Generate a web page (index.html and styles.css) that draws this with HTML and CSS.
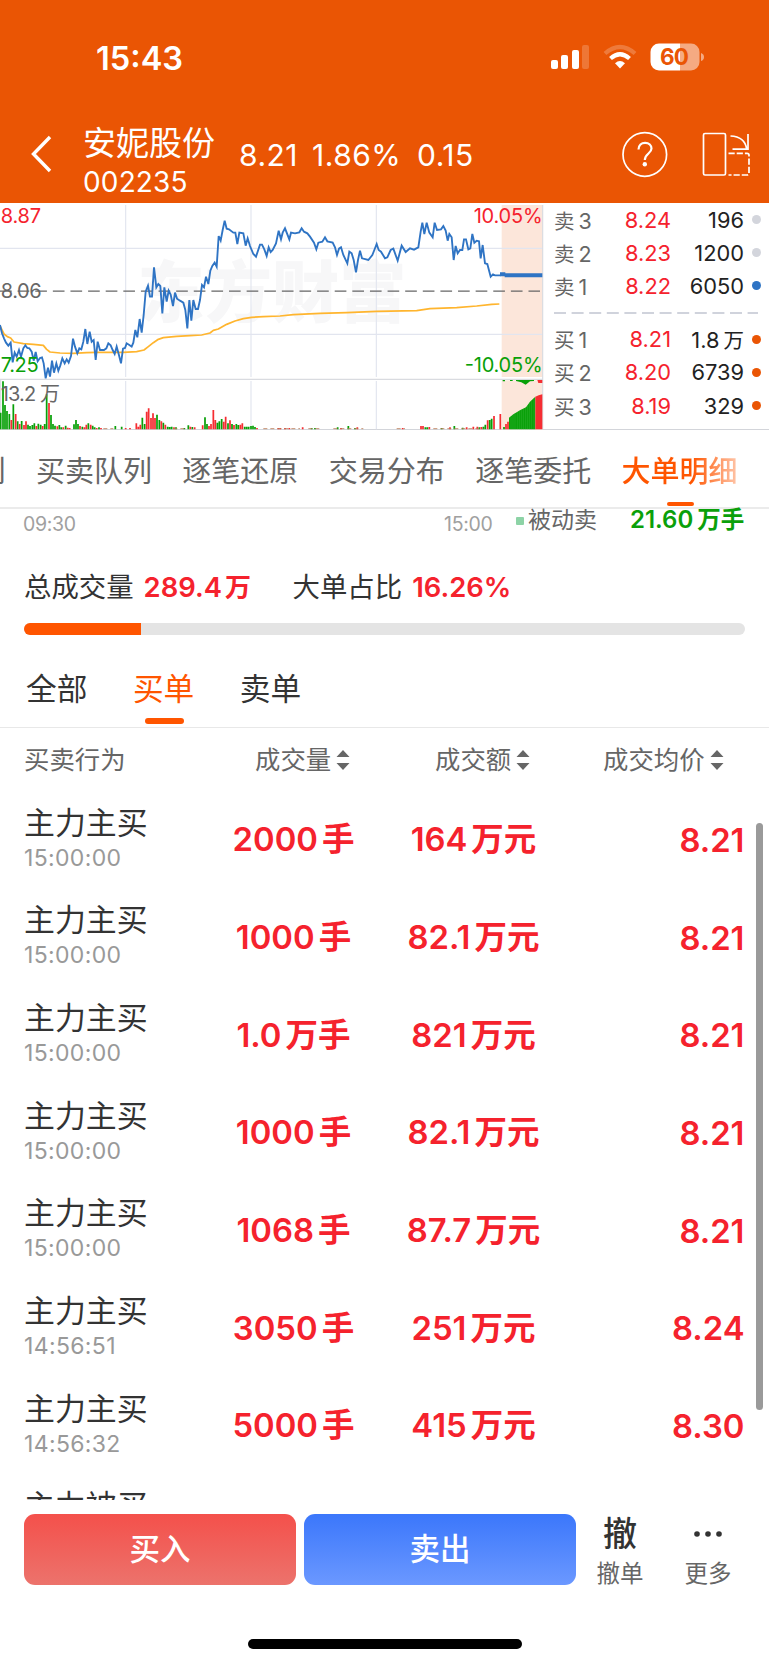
FILE: index.html
```html
<!DOCTYPE html>
<html lang="zh-CN">
<head>
<meta charset="utf-8">
<title>安妮股份 002235</title>
<link rel="stylesheet" href="styles.css">
</head>
<body>
<div class="app">
  <header class="top">
    <div class="status">
      <span class="clock">15:43</span>
      <svg class="status-icons" width="156" height="30" viewBox="0 0 156 30">
        <g fill="#fff">
          <rect x="0" y="17" width="7" height="9" rx="2"/>
          <rect x="10" y="12" width="7" height="14" rx="2"/>
          <rect x="21" y="7" width="7" height="19" rx="2"/>
          <rect x="31" y="2" width="7" height="24" rx="2" opacity=".2"/>
        </g>
        <g fill="none" stroke="#fff" stroke-width="4.2">
          <path d="M54 10.5Q69 -2.500 84 10.500" opacity=".22"/>
          <path d="M59.500 15.500Q69 7 78.500 15.500"/>
        </g>
        <path d="M64 20.200Q69 16 74 20.200L69 25.500Z" fill="#fff"/>
        <path d="M108 .5H129V27.500H108A8.500 8.500 0 0 1 99.500 19V9A8.500 8.500 0 0 1 108 .5Z" fill="#fff"/>
        <path d="M129 .5H140A8.500 8.500 0 0 1 148.500 9V19A8.500 8.500 0 0 1 140 27.500H129Z" fill="#fff" opacity=".5"/>
        <path d="M150 10Q153 11 153 14T150 18Z" fill="#fff" opacity=".5"/>
        <text class="battery" x="123.500" y="22" text-anchor="middle" textLength="29">60</text>
      </svg>
    </div>
    <div class="nav">
      <svg class="back" width="22" height="38" viewBox="0 0 22 38"><path d="M20 2L3.500 19L20 36" fill="none" stroke="#fff" stroke-width="3.4"/></svg>
      <div class="stock"><span class="name">安妮股份</span><span class="code">002235</span></div>
      <div class="quote"><span class="q1">8.21</span><span class="q2">1.86%</span><span class="q3">0.15</span></div>
      <svg class="nav-icons" width="130" height="48" viewBox="0 0 130 48">
        <g fill="none" stroke="#fff" stroke-width="1.7">
          <circle cx="22.800" cy="23.500" r="21.800"/>
          <path d="M16.500 18.500C16.500 14 19.500 11.800 23.100 11.800C27 11.800 29.500 14.300 29.500 17.600C29.500 22.500 22.800 22.700 22.800 29" stroke-width="2.200"/>
          <rect x="81.500" y="2.500" width="22" height="41.500" rx="1.500"/>
          <path d="M108.500 5C118.500 5.500 123.500 10.500 124.500 17.500M126 3V18.200H110.500"/>
          <path d="M106.500 22.300H125Q127 22.300 127 24V42Q127 44 125 44H106.500" stroke-dasharray="6.200 2"/>
        </g>
        <circle cx="22.800" cy="33.300" r="2.200" fill="#fff"/>
      </svg>
    </div>
  </header>

  <section class="market">
    <svg class="chart" width="545" height="227" viewBox="0 9 1635 681">
      <rect x="1505" y="15" width="122" height="516" fill="#fce6da"/>
      <rect x="1505" y="541" width="122" height="147" fill="#fce6da"/>
      <text class="mark" x="412" y="350" textLength="808">东方财富</text>
      <g fill="none" stroke="#e2e5ef" stroke-width="3.500">
        <path d="M0 145H1627M0 403H1627M377 15V531M377 543V688M753 15V531M753 543V688M1129 15V531M1129 543V688"/>
        <path d="M0 538H1628M2 538V688M1628 15V688" stroke="#d9dbe0"/>
      </g>
      <path d="M0 273.500H1620" fill="none" stroke="#666" stroke-width="3.600" stroke-dasharray="35 17.850"/>
      <g fill="none" stroke-width="5.200">
        <path stroke="#08a008" d="M2 688V638M9 688V544M15 688V615M21 688V633M28 688V642M40 688V613M53 688V664M65 688V663M84 688V674M90 688V678M97 688V675M103 688V670M115 688V671M122 688V674M134 688V672M140 688V583M153 688V645M159 688V672M165 688V677M178 688V675M184 688V682M197 688V677M222 688V673M228 688V660M234 688V672M247 688V680M265 688V670M278 688V677M284 688V682M297 688V682M346 688V678M365 688V680M427 688V653M434 688V672M471 688V644M478 688V660M490 688V668M503 688V680M509 688V681M515 688V680M528 688V682M553 688V684M565 688V676M577 688V681M615 688V652M621 688V672M652 688V668M658 688V664M665 688V657M684 688V670M696 688V672M709 688V672M715 688V675M734 688V680M740 688V680M746 688V680M753 688V678M759 688V677M765 688V681M935 688V684M945 688V684M1013 688V682M1045 688V678M1065 688V684M1276 688V682M1282 688V682M1325 688V684M1363 688V678M1388 688V683M1438 688V682M1450 688V680M1456 688V674M1469 688V660M1475 688V656M1512 688V681"/>
        <path stroke="#f52d32" d="M34 688V660M47 688V642M59 688V672M72 688V675M78 688V664M109 688V678M128 688V678M147 688V609M172 688V679M190 688V682M203 688V683M209 688V684M240 688V678M253 688V682M259 688V674M272 688V674M290 688V684M303 688V684M377 688V684M390 688V684M409 688V670M415 688V680M421 688V674M440 688V635M446 688V625M453 688V654M459 688V640M465 688V654M484 688V664M496 688V674M522 688V682M571 688V680M584 688V682M608 688V676M627 688V678M633 688V672M640 688V630M646 688V660M671 688V665M677 688V650M690 688V661M702 688V675M721 688V674M727 688V670M771 688V684M835 688V684M841 688V684M855 688V684M868 688V684M908 688V682M1023 688V684M1072 688V682M1208 688V684M1263 688V678M1269 688V678M1288 688V681M1350 688V682M1400 688V682M1420 688V680M1432 688V680M1444 688V681M1463 688V661M1482 688V648M1501 688V642M1518 688V672M1524 688V665"/>
      </g>
      <path d="M310 686H340M520 686H560M790 686H900M925 686H960M1000 686H1090M1190 686H1215M1300 686H1450" fill="none" stroke="#b87a55" stroke-width="2.500" stroke-dasharray="12 9"/>
      <path d="M1527 688V653L1540 643L1560 631L1578 622L1590 605L1606 590V688Z" fill="#08a008"/>
      <path d="M1606 688V590L1616 586L1627 583V688Z" fill="#f52d32"/>
      <path d="M1533 650V688M1539 644V688M1545 640V688M1552 636V688M1558 632V688M1564 628V688M1570 626V688M1577 622V688M1583 616V688M1589 606V688M1595 602V688M1602 594V688" stroke="#4fbb4f" stroke-width="1"/>
      <path d="M1508 540H1515V544H1508ZM1530 540H1538V543H1530ZM1548 540H1602V543L1590 544L1577 554L1564 547L1548 543Z" fill="#08a008"/>
      <path d="M1612 540H1627V549H1615Z" fill="#f52d32"/>
      <path fill="none" stroke="#ffb52e" stroke-width="5.200" stroke-linejoin="round" d="M0 378L12 402L22 410L32 414L42 426L70 431L100 433L130 436L140 448L150 456L180 459L220 460L260 458L290 457L370 457L410 455L432 450L445 440L460 428L475 418L490 413L530 409L570 407L605 405L630 399L640 391L655 387L680 373L705 363L730 356L755 352L790 350L840 348L880 344L960 340L1040 338L1130 334L1250 332L1290 326L1370 323L1430 318L1475 313L1498 312"/>
      <path fill="none" stroke="#2f74c4" stroke-width="5.600" d="M0 375L6 400L12 415L18 428L25 437L32 428L38 487L44 458L50 470L57 450L63 470L70 445L76 436L82 444L88 445L95 455L101 482L107 456L113 484L120 474L126 472L131 490L137 535L144 503L150 530L156 482L162 518L169 490L175 512L181 496L187 475L194 490L200 478L206 488L213 468L219 416L225 440L232 460L238 445L244 448L250 425L256 387L262 432L269 395L275 425L281 420L287 480L293 425L300 450L312 450L319 445L325 430L332 436L338 450L344 462L350 440L356 462L363 490L369 446L375 444L380 430L388 435L395 440L400 428L406 390L412 412L419 357L425 398L431 345L437 275L444 257L450 290L456 290L462 202L469 262L475 252L481 258L487 340L493 262L500 305L506 272L512 284L519 318L525 278L531 296L540 302L550 308L556 330L562 385L568 300L574 362L580 300L587 327L594 327L600 300L606 255L612 262L618 230L625 252L631 212L637 198L644 188L650 200L656 108L662 122L668 90L674 62L680 86L687 88L700 98L706 98L712 132L718 98L730 100L737 137L743 115L750 138L760 162L768 170L780 134L786 134L793 148L800 168L806 142L812 156L818 150L828 130L836 92L843 118L848 98L855 85L868 118L873 98L885 100L898 97L905 85L912 95L922 100L930 110L942 128L949 148L955 128L967 125L975 112L982 124L998 128L1005 142L1011 165L1017 146L1023 142L1030 165L1042 190L1048 155L1055 160L1061 180L1068 217L1074 180L1080 152L1086 175L1105 180L1117 165L1123 150L1130 132L1136 150L1143 155L1155 175L1162 172L1172 150L1180 146L1193 182L1205 137L1217 156L1230 145L1242 149L1255 142L1262 95L1267 68L1273 102L1280 68L1288 98L1298 112L1304 68L1311 90L1323 88L1330 78L1337 92L1343 122L1348 102L1355 112L1361 180L1367 138L1373 160L1380 150L1387 150L1392 118L1398 118L1405 148L1411 145L1417 102L1423 128L1430 122L1437 124L1442 175L1448 135L1455 190L1462 192L1472 230L1479 223L1485 226L1502 226"/>
      <path d="M1500 223H1516M1514 226H1627" fill="none" stroke="#2f74c4" stroke-width="12"/>
      <g class="axis">
        <text x="2" y="68" fill="#f5222d" textLength="121">8.87</text>
        <text x="2" y="293" fill="#666" textLength="123">8.06</text>
        <text x="2" y="517" fill="#08a008" textLength="114">7.25</text>
        <text x="2" y="602" fill="#666" textLength="178">13.2 万</text>
        <text x="1628" y="68" fill="#f5222d" text-anchor="end" textLength="207">10.05%</text>
        <text x="1628" y="517" fill="#08a008" text-anchor="end" textLength="234">-10.05%</text>
      </g>
    </svg>
    <div class="book">
      <div class="level"><span>卖<i>3</i></span><b>8.24</b><em>196</em><u class="dot grey"></u></div>
      <div class="level"><span>卖<i>2</i></span><b>8.23</b><em>1200</em><u class="dot grey"></u></div>
      <div class="level"><span>卖<i>1</i></span><b>8.22</b><em>6050</em><u class="dot blue"></u></div>
      <svg class="split" width="204" height="20" viewBox="0 0 204 20"><path d="M0 10H204" stroke="#d0d3dc" stroke-width="2" stroke-dasharray="12 5.600"/></svg>
      <div class="level"><span>买<i>1</i></span><b>8.21</b><em>1.8<i>万</i></em><u class="dot orange"></u></div>
      <div class="level"><span>买<i>2</i></span><b>8.20</b><em>6739</em><u class="dot orange"></u></div>
      <div class="level"><span>买<i>3</i></span><b>8.19</b><em>329</em><u class="dot orange"></u></div>
    </div>
  </section>

  <nav class="tabs">
    <span>买卖五列</span><span>买卖队列</span><span>逐笔还原</span><span>交易分布</span><span>逐笔委托</span><span class="active">大单明细</span>
  </nav>

  <section class="flow">
    <span class="t-start">09:30</span><span class="t-end">15:00</span>
    <u class="swatch"></u><span class="kind">被动卖</span><b class="vol">21.60<i>万手</i></b>
  </section>

  <section class="summary">
    <div class="totals"><span>总成交量</span><b class="total">289.4<i>万</i></b><span class="share-label">大单占比</span><b class="share">16.26%</b></div>
    <div class="bar"><div class="fill" style="width:16.26%"></div></div>
  </section>

  <nav class="filters"><span>全部</span><span class="active">买单</span><span>卖单</span></nav>

  <div class="cols">
    <span class="c1">买卖行为</span>
    <span class="c2">成交量<svg width="14" height="22" viewBox="0 0 14 22"><path d="M7 1L13.500 8H.5ZM.5 14H13.500L7 21Z"/></svg></span>
    <span class="c3">成交额<svg width="14" height="22" viewBox="0 0 14 22"><path d="M7 1L13.500 8H.5ZM.5 14H13.500L7 21Z"/></svg></span>
    <span class="c4">成交均价<svg width="14" height="22" viewBox="0 0 14 22"><path d="M7 1L13.500 8H.5ZM.5 14H13.500L7 21Z"/></svg></span>
  </div>

  <main class="list">
    <div class="row"><div class="who"><span>主力主买</span><time>15:00:00</time></div><b class="lots">2000<i>手</i></b><b class="amt">164<i>万元</i></b><b class="avg">8.21</b></div>
    <div class="row"><div class="who"><span>主力主买</span><time>15:00:00</time></div><b class="lots">1000<i>手</i></b><b class="amt">82.1<i>万元</i></b><b class="avg">8.21</b></div>
    <div class="row"><div class="who"><span>主力主买</span><time>15:00:00</time></div><b class="lots">1.0<i>万手</i></b><b class="amt">821<i>万元</i></b><b class="avg">8.21</b></div>
    <div class="row"><div class="who"><span>主力主买</span><time>15:00:00</time></div><b class="lots">1000<i>手</i></b><b class="amt">82.1<i>万元</i></b><b class="avg">8.21</b></div>
    <div class="row"><div class="who"><span>主力主买</span><time>15:00:00</time></div><b class="lots">1068<i>手</i></b><b class="amt">87.7<i>万元</i></b><b class="avg">8.21</b></div>
    <div class="row"><div class="who"><span>主力主买</span><time>14:56:51</time></div><b class="lots">3050<i>手</i></b><b class="amt">251<i>万元</i></b><b class="avg">8.24</b></div>
    <div class="row"><div class="who"><span>主力主买</span><time>14:56:32</time></div><b class="lots">5000<i>手</i></b><b class="amt">415<i>万元</i></b><b class="avg">8.30</b></div>
    <div class="row"><div class="who"><span>主力被买</span></div></div>
    <div class="thumb"></div>
  </main>

  <footer class="actions">
    <div class="btn buy">买入</div>
    <div class="btn sell">卖出</div>
    <div class="act cancel"><strong>撤</strong><span>撤单</span></div>
    <div class="act more"><svg width="30" height="34" viewBox="0 0 30 34"><g fill="#333"><circle cx="4" cy="16" r="2.800"/><circle cx="15" cy="16" r="2.800"/><circle cx="26" cy="16" r="2.800"/></g></svg><span>更多</span></div>
  </footer>
  <div class="home"></div>
</div>
</body>
</html>
```
FILE: styles.css
```css
* { box-sizing: border-box; }
body { margin: 0; background: #fff; }
i, em, u { font-style: normal; text-decoration: none; }
svg { display: block; flex: none; }

.app {
  width: 769px;
  height: 1665px;
  overflow: hidden;
  display: flex;
  flex-direction: column;
  font-family: Inter, "Noto Sans CJK SC", sans-serif;
  color: #333;
  white-space: nowrap;
}
.app > * { flex: none; }

.top { height: 203px; background: #ea5504; color: #fff; }
.status { height: 115px; display: flex; align-items: flex-start; padding: 37px 0 0 96px; }
.clock { width: 455px; font-size: 32.600px; line-height: 42px; font-weight: 600; }
.status-icons { margin-top: 6px; }
.battery { font: 700 22.500px Inter, sans-serif; fill: #ea5504; }

.nav { height: 88px; display: flex; align-items: flex-start; padding-left: 30px; }
.back { margin-top: 20px; }
.stock { width: 156px; margin-left: 31px; padding-top: 8px; display: flex; flex-direction: column; }
.name { font-size: 33px; line-height: 40px; }
.code { font-size: 28px; line-height: 38px; letter-spacing: .15px; }
.quote { width: 383px; display: flex; padding-top: 20px; font-size: 30px; line-height: 40px; letter-spacing: .5px; }
.q1 { width: 73px; }
.q2 { width: 105px; }
.nav-icons { margin-top: 16px; }

.market { height: 227px; display: flex; border-bottom: 1px solid #d3d5da; }
.axis { font: 60px Inter, "Noto Sans CJK SC", sans-serif; }
.mark { font: 900 202px "Noto Sans CJK SC", sans-serif; fill: #f7f7f8; }
.book { width: 224px; padding: 0 0 0 9px; font-size: 21.800px; }
.level { height: 33.200px; display: flex; align-items: center; }
.level span { width: 52px; color: #666; font-size: 20.500px; }
.level span i { margin-left: 4px; font-size: 21.500px; }
.level b { width: 65px; text-align: right; font-weight: 400; color: #f5222d; }
.level em { width: 73px; text-align: right; color: #222; }
.level em i { margin-left: 4px; font-size: 20.500px; }
.dot { width: 9px; height: 9px; border-radius: 50%; margin-left: 8px; }
.grey { background: #d3d5dc; }
.blue { background: #2f74c4; }
.orange { background: #ea5504; }

.tabs {
  height: 79px;
  padding-top: 17px;
  margin-left: -110.500px;
  width: 879.500px;
  display: flex;
  gap: 30.400px;
  border-bottom: 2px solid #ebebeb;
  font-size: 29px;
  line-height: 50px;
  color: #666;
}
.tabs .active {
  position: relative;
  font-weight: 500;
  background: linear-gradient(90deg, #ff5500 60%, #ffd5c0 105%);
  -webkit-background-clip: text;
  background-clip: text;
  color: transparent;
}
.tabs .active::after {
  content: "";
  position: absolute;
  left: 45px;
  top: 55px;
  width: 27px;
  height: 4px;
  border-radius: 2px;
  background: #ff5500;
}

.flow { height: 51px; display: flex; align-items: flex-start; padding-left: 23px; }
.t-start, .t-end { font-size: 19.500px; line-height: 31px; color: #a0a0a0; letter-spacing: -.3px; }
.t-start { width: 421px; }
.t-end { width: 72px; }
.swatch { width: 8px; height: 8px; margin-top: 8px; border-radius: 1px; background: #8dd3a6; }
.kind { width: 106px; padding-left: 4px; font-size: 23px; line-height: 22px; color: #666; }
.vol { font-size: 24px; line-height: 22px; font-weight: 600; color: #0aa00a; }
.vol i { margin-left: 4px; font-size: 23.500px; }

.summary { height: 91px; padding: 7px 24px 0; }
.totals { display: flex; font-size: 27.400px; line-height: 40px; }
.totals b { color: #f5222d; font-weight: 600; }
.total { margin-left: 10px; width: 149px; }
.total i { margin-left: 3px; font-size: 26px; }
.share { margin-left: 10px; }
.bar { width: 721px; height: 12px; margin-top: 15px; border-radius: 6px; overflow: hidden; background: #e4e4e4; }
.fill { height: 12px; background: #ff5500; }

.filters {
  height: 77px;
  padding: 13px 0 0 26px;
  display: flex;
  gap: 45.500px;
  border-bottom: 1px solid #e8e8e8;
  font-size: 30.700px;
  line-height: 50px;
}
.filters .active { position: relative; color: #ff5500; }
.filters .active::after {
  content: "";
  position: absolute;
  left: 12px;
  top: 54px;
  width: 39px;
  height: 6px;
  border-radius: 3px;
  background: #ff5500;
}

.cols { height: 63px; display: flex; padding: 0 0 0 24px; font-size: 25.400px; line-height: 63px; color: #666; }
.cols span { display: flex; align-items: center; }
.cols svg { margin-left: 5px; fill: #666; }
.c1 { width: 231px; }
.c2 { width: 180px; }
.c3 { width: 168px; }

.list { position: relative; height: 709px; overflow: hidden; }
.row { height: 97.700px; display: flex; align-items: center; padding-left: 24px; }
.who { width: 180px; height: 97.700px; padding-top: 10.500px; display: flex; flex-direction: column; }
.who span { font-size: 30.900px; line-height: 41px; }
.who time { font-size: 23px; line-height: 31px; color: #999; letter-spacing: .35px; }
.row b { font-size: 32.800px; line-height: 40px; font-weight: 600; color: #f5222d; }
.row i { margin-left: 4px; font-size: 32.500px; }
.lots { width: 179px; text-align: center; }
.amt { width: 181px; text-align: center; }
.avg { width: 180.500px; text-align: right; }
.thumb { position: absolute; left: 756px; top: 32px; width: 7px; height: 587px; border-radius: 4px; background: #9a9a9a; }

.actions { height: 139px; display: flex; padding: 14px 0 0 24px; }
.btn { width: 272px; height: 71px; margin-right: 8px; border-radius: 11px; color: #fff; font-size: 30.500px; line-height: 70px; font-weight: 500; text-align: center; }
.buy { background: linear-gradient(#f4504b, #ec736c); }
.sell { background: linear-gradient(#3b77fb, #6b98ff); }
.act { width: 88px; display: flex; flex-direction: column; align-items: center; font-size: 23.500px; line-height: 40px; color: #666; }
.act strong { font-size: 34px; line-height: 40px; font-weight: 500; color: #333; }
.act svg { margin: 4px 0 2px; }
.cancel { margin-left: -8px; }
.home { width: 274px; height: 10px; margin-left: 248px; border-radius: 5px; background: #000; }
```
